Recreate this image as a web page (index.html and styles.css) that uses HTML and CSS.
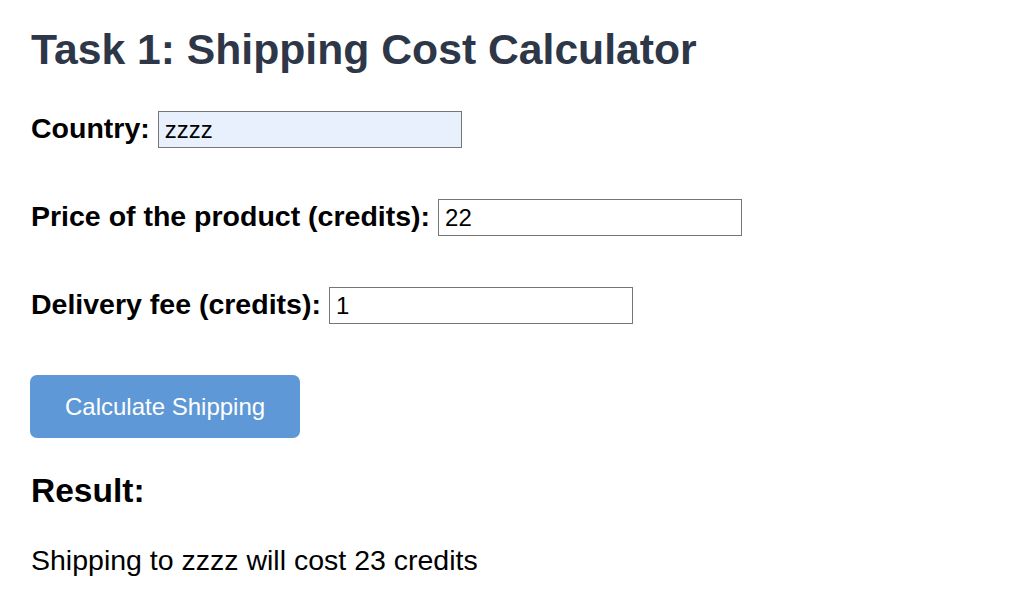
FILE: index.html
```html
<!DOCTYPE html>
<html lang="en">
<head>
<meta charset="utf-8">
<title>Shipping Cost Calculator</title>
<link rel="stylesheet" href="styles.css">
</head>
<body>
<main class="page">
  <h1 class="title">Task 1: Shipping Cost Calculator</h1>
  <form class="form">
    <div class="row">
      <label class="label" for="country">Country:</label>
      <input class="field field-filled" id="country" type="text" value="zzzz">
    </div>
    <div class="row">
      <label class="label" for="price">Price of the product (credits):</label>
      <input class="field" id="price" type="text" value="22">
    </div>
    <div class="row">
      <label class="label" for="fee">Delivery fee (credits):</label>
      <input class="field" id="fee" type="text" value="1">
    </div>
    <button class="btn" type="button">Calculate Shipping</button>
  </form>
  <h2 class="result-title">Result:</h2>
  <p class="result-text">Shipping to zzzz will cost 23 credits</p>
</main>
</body>
</html>
```

FILE: styles.css
```css
html, body {
  margin: 0;
  padding: 0;
  background: #ffffff;
}

body {
  font-family: "Liberation Sans", Arial, sans-serif;
  color: #000000;
}

.page {
  padding: 24px 31px 0;
}

.title {
  margin: 0 0 37px;
  font-size: 42.7px;
  line-height: 50px;
  font-weight: 700;
  color: #2d3748;
}

.form {
  display: flex;
  flex-direction: column;
  align-items: flex-start;
  margin: 0;
}

.row {
  display: flex;
  align-items: center;
  gap: 8px;
  height: 37px;
  margin-bottom: 51px;
}

.label {
  padding-bottom: 3px;
  font-size: 28.5px;
  line-height: 34px;
  font-weight: 700;
  white-space: nowrap;
}

.field {
  box-sizing: border-box;
  width: 304px;
  height: 37px;
  margin: 0;
  padding: 0 6px;
  border: 1px solid #767676;
  border-radius: 0;
  background: #ffffff;
  font-family: "Liberation Sans", Arial, sans-serif;
  font-size: 24px;
  color: #000000;
  outline: none;
}

.field-filled {
  background: #e8f0fe;
}

.btn {
  box-sizing: border-box;
  height: 63px;
  margin: 0 0 0 -1px;
  padding: 0 35px;
  border: none;
  border-radius: 7px;
  background: #5e98d6;
  color: #ffffff;
  font-family: "Liberation Sans", Arial, sans-serif;
  font-size: 24px;
  line-height: 28px;
  cursor: pointer;
}

.result-title {
  margin: 34px 0 0;
  font-size: 33.5px;
  line-height: 38px;
  font-weight: 700;
}

.result-text {
  margin: 34px 0 0;
  font-size: 28.5px;
  line-height: 32px;
}
```
